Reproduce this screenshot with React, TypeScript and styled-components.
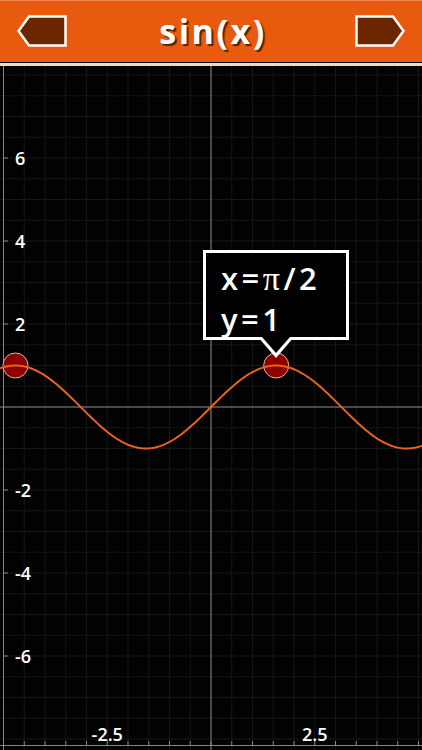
import React from 'react';
import styled, { createGlobalStyle } from 'styled-components';

const GlobalStyle = createGlobalStyle`
  html, body {
    margin: 0;
    padding: 0;
    background: #000;
    overflow: hidden;
  }
  * {
    box-sizing: border-box;
  }
`;

const Screen = styled.div`
  width: 422px;
  height: 750px;
  display: flex;
  flex-direction: column;
  background: #000;
  font-family: 'Open Sans', 'Liberation Sans', sans-serif;
`;

const Header = styled.header`
  height: 66px;
  flex: none;
  display: flex;
  align-items: center;
  justify-content: space-between;
  padding: 0 17px 3px 17px;
  background: #e85a0e;
  border-top: 1px solid #f08a50;
  border-bottom: 3px solid #f3d6c4;
  box-shadow: inset 0 -1px 0 #000;
`;

const Title = styled.h1`
  margin: 0 0 0 4px;
  color: #fff;
  font-size: 34px;
  font-weight: 700;
  letter-spacing: 2.5px;
  line-height: 1;
  text-shadow: 2px 2px 1px #5a2000;
`;

const NavButton = styled.button`
  width: 50px;
  height: 32px;
  padding: 0;
  border: none;
  background: none;
  display: flex;
  cursor: pointer;
`;

const ChartArea = styled.div`
  position: relative;
  flex: 1;
  overflow: hidden;
`;

const Tooltip = styled.div`
  position: absolute;
  left: 203px;
  top: 184px;
  width: 146px;
  height: 90px;
  padding: 5px 0 0 15px;
  background: #000;
  border: 3px solid #fff;
  color: #fff;
  font-size: 31px;
  font-weight: 600;
  line-height: 41px;
  letter-spacing: 3.5px;
  white-space: nowrap;

  &::before,
  &::after {
    content: '';
    position: absolute;
    top: 100%;
    border-style: solid;
    border-color: transparent;
  }
  &::before {
    left: 52px;
    border-width: 21px 18px 0 18px;
    border-top-color: #fff;
  }
  &::after {
    left: 56px;
    border-width: 16px 14px 0 14px;
    border-top-color: #000;
  }
`;

const Pi = styled.span`
  font-family: 'Liberation Serif', 'DejaVu Serif', serif;
  font-size: 34px;
  font-weight: 400;
`;

const Arrow = ({ dir }: { dir: 'left' | 'right' }) => (
  <svg width="50" height="32" viewBox="0 0 50 32">
    <polygon
      points={dir === 'left' ? '1.5,16 12,1.5 48.5,1.5 48.5,30.5 12,30.5' : '1.5,1.5 38,1.5 48.5,16 38,30.5 1.5,30.5'}
      fill="#6b2600"
      stroke="#fff"
      strokeWidth="2.5"
      strokeLinejoin="miter"
    />
  </svg>
);

const W = 422;
const H = 684;
const OX = 211;
const OY = 341;
const S = 41.5;

const px = (x: number) => OX + x * S;
const py = (y: number) => OY - y * S;

const Plot = () => {
  const grid: React.ReactNode[] = [];
  for (let k = -12; k <= 12; k++) {
    const x = OX + k * S * 0.5;
    grid.push(<line key={'v' + k} x1={x} y1={0} x2={x} y2={H} stroke="#161616" strokeWidth="1" />);
  }
  for (let k = -18; k <= 18; k++) {
    const y = OY + k * S * 0.5;
    grid.push(<line key={'h' + k} x1={0} y1={y} x2={W} y2={y} stroke="#161616" strokeWidth="1" />);
  }

  const bottomTicks: React.ReactNode[] = [];
  for (let k = -12; k <= 12; k++) {
    const x = OX + k * S * 0.5;
    bottomTicks.push(<line key={'b' + k} x1={x} y1={675} x2={x} y2={679} stroke="#888" strokeWidth="1" />);
  }

  const yLabels = [6, 4, 2, -2, -4, -6];

  let d = '';
  for (let sx = 0; sx <= W; sx += 2) {
    const x = (sx - OX) / S;
    d += (sx === 0 ? 'M' : 'L') + sx + ' ' + py(Math.sin(x)).toFixed(2) + ' ';
  }

  const points = [-1.5 * Math.PI, 0.5 * Math.PI];

  return (
    <svg width={W} height={H} viewBox={`0 0 ${W} ${H}`} style={{ display: 'block' }}>
      <rect width={W} height={H} fill="#020202" />
      {grid}
      <line x1={OX} y1={0} x2={OX} y2={H} stroke="#858585" strokeWidth="1" />
      <line x1={0} y1={OY} x2={W} y2={OY} stroke="#858585" strokeWidth="1" />
      <line x1={3.5} y1={0} x2={3.5} y2={H} stroke="#858585" strokeWidth="1" />
      <line x1={0} y1={679.5} x2={W} y2={679.5} stroke="#858585" strokeWidth="1" />
      {bottomTicks}
      {yLabels.map(v => (
        <g key={v}>
          <line x1={3} y1={py(v)} x2={8} y2={py(v)} stroke="#888" strokeWidth="1" />
          <text
            x={15}
            y={py(v) + 6.5}
            fill="#fff"
            fontSize="18"
            fontWeight="600"
            fontFamily="'Open Sans', 'Liberation Sans', sans-serif"
          >
            {v}
          </text>
        </g>
      ))}
      {[-2.5, 2.5].map(v => (
        <text
          key={v}
          x={px(v)}
          y={675}
          fill="#fff"
          fontSize="18"
          fontWeight="600"
          textAnchor="middle"
          fontFamily="'Open Sans', 'Liberation Sans', sans-serif"
        >
          {v}
        </text>
      ))}
      {points.map(p => (
        <circle key={p} cx={px(p)} cy={py(1)} r="12.5" fill="#8c0000" stroke="#e7b4ac" strokeWidth="1" />
      ))}
      <path d={d} fill="none" stroke="#e8621e" strokeWidth="2" />
    </svg>
  );
};

const App: React.FC = () => {
  return (
    <>
      <GlobalStyle />
      <Screen>
        <Header>
          <NavButton aria-label="previous">
            <Arrow dir="left" />
          </NavButton>
          <Title>sin(x)</Title>
          <NavButton aria-label="next">
            <Arrow dir="right" />
          </NavButton>
        </Header>
        <ChartArea>
          <Plot />
          <Tooltip>
            x=<Pi>π</Pi>/2
            <br />
            y=1
          </Tooltip>
        </ChartArea>
      </Screen>
    </>
  );
};

export default App;
